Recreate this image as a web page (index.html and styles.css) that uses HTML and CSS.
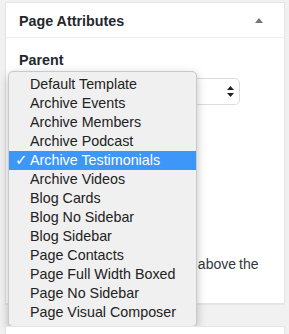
FILE: index.html
```html
<!DOCTYPE html>
<html lang="en">
<head>
    <meta charset="UTF-8">
    <meta name="viewport" content="width=device-width, initial-scale=1.0">
    <title>Page Attributes</title>
    <link rel="stylesheet" href="styles.css">
</head>
<body>

    <div class="postbox">
        <div class="postbox-header">
            <h2>Page Attributes</h2>
            <span class="toggle-arrow"></span>
        </div>
        <div class="inside">
            <p class="attr-label">Parent</p>
            <div class="fake-select">
                <span class="select-text">(no parent)</span>
                <svg class="select-arrows" width="7" height="11" viewBox="0 0 7 11">
                    <path d="M3.5 0 L7 4 L0 4 Z M0 7 L7 7 L3.5 11 Z" fill="#222"/>
                </svg>
            </div>
            <p class="attr-label">Template</p>
            <div class="fake-select short">
                <span class="select-text">Archive Testimonials</span>
            </div>
            <p class="attr-label">Order</p>
            <div class="fake-input">0</div>
            <p class="help-text">Need help? Use the Help tab above the screen title.</p>
        </div>

        <ul class="template-menu">
            <li>Default Template</li>
            <li>Archive Events</li>
            <li>Archive Members</li>
            <li>Archive Podcast</li>
            <li class="selected"><span class="check">✓</span>Archive Testimonials</li>
            <li>Archive Videos</li>
            <li>Blog Cards</li>
            <li>Blog No Sidebar</li>
            <li>Blog Sidebar</li>
            <li>Page Contacts</li>
            <li>Page Full Width Boxed</li>
            <li>Page No Sidebar</li>
            <li>Page Visual Composer</li>
        </ul>
    </div>

    <div class="postbox next-box"></div>

</body>
</html>
```

FILE: styles.css
```css
body {
    margin: 0;
    padding: 2px 4px 0 5px;
    background-color: #f1f1f1;
    font-family: "Liberation Sans", Arial, sans-serif;
    color: #23282d;
    overflow: hidden;
}
.postbox {
    position: relative;
    background-color: #fff;
    border: 1px solid #e5e5e5;
    box-shadow: 0 1px 1px rgba(0, 0, 0, 0.04);
    height: 300px;
}
.postbox-header {
    display: flex;
    align-items: center;
    justify-content: space-between;
    height: 35px;
    padding: 2px 21px 0 13px;
    box-sizing: border-box;
    border-bottom: 1px solid #eee;
}
.postbox-header h2 {
    margin: 0;
    font-size: 14.3px;
    font-weight: bold;
    color: #23282d;
}
.toggle-arrow {
    width: 0;
    height: 0;
    border-left: 4px solid transparent;
    border-right: 4px solid transparent;
    border-bottom: 5px solid #72777c;
    margin-top: -2px;
}
.inside {
    padding: 0 13px;
}
.attr-label {
    margin: 13px 0 9px;
    font-size: 14.3px;
    font-weight: bold;
    line-height: 18px;
}
.fake-select {
    display: flex;
    align-items: center;
    justify-content: space-between;
    box-sizing: border-box;
    width: 221px;
    height: 27px;
    padding: 0 5px 0 8px;
    border: 1px solid #ddd;
    border-radius: 5px;
    font-size: 13px;
}
.fake-select.short {
    width: 170px;
}
.select-arrows {
    display: block;
}
.fake-input {
    box-sizing: border-box;
    width: 60px;
    height: 27px;
    border: 1px solid #ddd;
    padding: 4px 8px;
    font-size: 13px;
}
.help-text {
    margin: 16px 0 0;
    font-size: 14px;
    line-height: 19px;
    word-spacing: -0.8px;
    color: #32373c;
}
.template-menu {
    position: absolute;
    left: 2px;
    top: 68px;
    width: 187px;
    margin: 0;
    padding: 3px 0 4px;
    list-style: none;
    background-color: #f0f0f0;
    border: 1px solid #c9c9c9;
    border-radius: 5px;
    box-shadow: 0 3px 10px rgba(0, 0, 0, 0.25);
}
.template-menu li {
    position: relative;
    height: 19px;
    line-height: 19px;
    padding-left: 21px;
    font-size: 14.3px;
    color: #222;
}
.template-menu li.selected {
    background-color: #3d97f8;
    color: #fff;
}
.check {
    position: absolute;
    left: 6px;
    top: 0;
    font-family: "DejaVu Sans", sans-serif;
    font-size: 15px;
    font-weight: bold;
}
.next-box {
    height: 40px;
    margin-top: 22px;
}
```
